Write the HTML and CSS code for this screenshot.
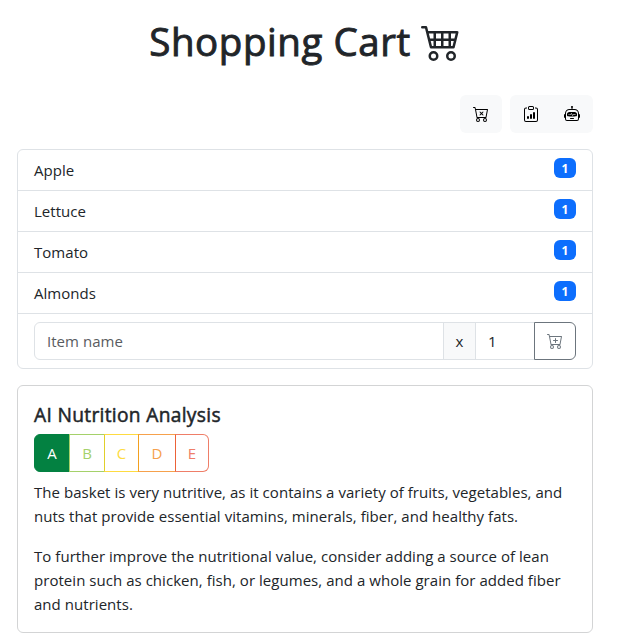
FILE: index.html
```html
<!DOCTYPE html>
<html lang="en">
<head>
<meta charset="utf-8">
<title>Shopping Cart</title>
<link rel="stylesheet" href="styles.css">
</head>
<body>
<svg class="defs" width="0" height="0">
  <symbol id="cart" viewBox="0 0 16 16"><path d="M.5 1a.5.5 0 0 0 0 1h1.11l.401 1.607 1.498 7.985A.5.5 0 0 0 4 12h1a2 2 0 1 0 0 4 2 2 0 0 0 0-4h7a2 2 0 1 0 0 4 2 2 0 0 0 0-4h1a.5.5 0 0 0 .491-.408l1.5-8A.5.5 0 0 0 14.5 3H2.89l-.405-1.621A.5.5 0 0 0 2 1zm3.915 10L3.102 4h10.796l-1.313 7zM6 14a1 1 0 1 1-2 0 1 1 0 0 1 2 0m7 0a1 1 0 1 1-2 0 1 1 0 0 1 2 0"/></symbol>
</svg>
<main class="container">
  <h1 class="title"><span>Shopping Cart</span>
    <svg class="title-icon" viewBox="0 0 16 16"><path d="M0 2.5A.5.5 0 0 1 .5 2H2a.5.5 0 0 1 .485.379L2.89 4H14.5a.5.5 0 0 1 .485.621l-1.5 6A.5.5 0 0 1 13 11H4a.5.5 0 0 1-.485-.379L1.61 3H.5a.5.5 0 0 1-.5-.5M3.14 5l.5 2H5V5zM6 5v2h2V5zm3 0v2h2V5zm3 0v2h1.36l.5-2zm1.11 3H12v2h.61zM11 8H9v2h2zM8 8H6v2h2zM5 8H3.89l.5 2H5zm0 5a1 1 0 1 0 0 2 1 1 0 0 0 0-2m-2 1a2 2 0 1 1 4 0 2 2 0 0 1-4 0m9-1a1 1 0 1 0 0 2 1 1 0 0 0 0-2m-2 1a2 2 0 1 1 4 0 2 2 0 0 1-4 0"/></svg>
  </h1>
  <div class="toolbar">
    <button class="btn" type="button" aria-label="Clear cart"><svg class="icon" viewBox="0 0 16 16"><use href="#cart"/><path d="M7.354 5.646a.5.5 0 1 0-.708.708L7.793 7.5 6.646 8.646a.5.5 0 1 0 .708.708L8.5 8.207l1.146 1.147a.5.5 0 0 0 .708-.708L9.207 7.5l1.147-1.146a.5.5 0 0 0-.708-.708L8.5 6.793z"/></svg></button>
    <div class="btn-group">
      <button class="btn" type="button" aria-label="Report"><svg class="icon" viewBox="0 0 16 16"><path d="M4 11a1 1 0 1 1 2 0v1a1 1 0 1 1-2 0zm6-4a1 1 0 1 1 2 0v5a1 1 0 1 1-2 0zM7 9a1 1 0 0 1 2 0v3a1 1 0 1 1-2 0z"/><path d="M4 1.5H3a2 2 0 0 0-2 2V14a2 2 0 0 0 2 2h10a2 2 0 0 0 2-2V3.5a2 2 0 0 0-2-2h-1v1h1a1 1 0 0 1 1 1V14a1 1 0 0 1-1 1H3a1 1 0 0 1-1-1V3.5a1 1 0 0 1 1-1h1z"/><path d="M9.5 1a.5.5 0 0 1 .5.5v1a.5.5 0 0 1-.5.5h-3a.5.5 0 0 1-.5-.5v-1a.5.5 0 0 1 .5-.5zm-3-1A1.5 1.5 0 0 0 5 1.5v1A1.5 1.5 0 0 0 6.5 4h3A1.5 1.5 0 0 0 11 2.5v-1A1.5 1.5 0 0 0 9.5 0z"/></svg></button>
      <button class="btn" type="button" aria-label="AI analysis"><svg class="icon" viewBox="0 0 16 16"><path d="M6 12.5a.5.5 0 0 1 .5-.5h3a.5.5 0 0 1 0 1h-3a.5.5 0 0 1-.5-.5M3 8.062C3 6.76 4.235 5.765 5.53 5.886a26.6 26.6 0 0 0 4.94 0C11.765 5.765 13 6.76 13 8.062v1.157a.93.93 0 0 1-.765.935c-.845.147-2.34.346-4.235.346s-3.39-.2-4.235-.346A.93.93 0 0 1 3 9.219zm4.542-.827a.25.25 0 0 0-.217.068l-.92.9a25 25 0 0 1-1.871-.183.25.25 0 0 0-.068.495c.55.076 1.232.149 2.02.193a.25.25 0 0 0 .189-.071l.754-.736.847 1.71a.25.25 0 0 0 .404.062l.932-.97a25 25 0 0 0 1.922-.188.25.25 0 0 0-.068-.495c-.538.074-1.207.145-1.98.189a.25.25 0 0 0-.166.076l-.754.785-.842-1.7a.25.25 0 0 0-.182-.135"/><path d="M8.5 1.866a1 1 0 1 0-1 0V3h-2A4.5 4.5 0 0 0 1 7.5V8a1 1 0 0 0-1 1v2a1 1 0 0 0 1 1v1a2 2 0 0 0 2 2h10a2 2 0 0 0 2-2v-1a1 1 0 0 0 1-1V9a1 1 0 0 0-1-1v-.5A4.5 4.5 0 0 0 10.5 3h-2zM14 7.5V13a1 1 0 0 1-1 1H3a1 1 0 0 1-1-1V7.5A3.5 3.5 0 0 1 5.5 4h5A3.5 3.5 0 0 1 14 7.5"/></svg></button>
    </div>
  </div>
  <ul class="list">
    <li class="item"><span>Apple</span><span class="badge">1</span></li>
    <li class="item"><span>Lettuce</span><span class="badge">1</span></li>
    <li class="item"><span>Tomato</span><span class="badge">1</span></li>
    <li class="item"><span>Almonds</span><span class="badge">1</span></li>
    <li class="item">
      <div class="input-group">
        <input class="field name" type="text" placeholder="Item name">
        <span class="addon">x</span>
        <input class="field qty" type="text" value="1">
        <button class="add" type="button" aria-label="Add item"><svg class="icon" viewBox="0 0 16 16"><use href="#cart"/><path d="M9 5.5a.5.5 0 0 0-1 0V7H6.5a.5.5 0 0 0 0 1H8v1.5a.5.5 0 0 0 1 0V8h1.5a.5.5 0 0 0 0-1H9z"/></svg></button>
      </div>
    </li>
  </ul>
  <section class="card">
    <h2 class="card-title">AI Nutrition Analysis</h2>
    <div class="grades">
      <span class="grade a">A</span><span class="grade b">B</span><span class="grade c">C</span><span class="grade d">D</span><span class="grade e">E</span>
    </div>
    <p class="text">The basket is very nutritive, as it contains a variety of fruits, vegetables, and nuts that provide essential vitamins, minerals, fiber, and healthy fats.</p>
    <p class="text">To further improve the nutritional value, consider adding a source of lean protein such as chicken, fish, or legumes, and a whole grain for added fiber and nutrients.</p>
  </section>
</main>
</body>
</html>
```
FILE: styles.css
```css
*, *::before, *::after { box-sizing: border-box; }
body {
  margin: 0;
  background: #fff;
  color: #212529;
  font-family: "Open Sans", "Noto Sans", sans-serif;
  font-size: 15px;
  line-height: 24px;
  letter-spacing: 0.04px;
  overflow: hidden;
}
.defs { position: absolute; }
.container { width: 576px; margin-left: 17px; padding-top: 17px; }
.title {
  display: flex;
  justify-content: center;
  gap: 10px;
  height: 48px;
  margin: 0 0 30px;
  font-size: 38.5px;
  font-weight: 400;
  line-height: 48px;
  letter-spacing: 0.55px;
  -webkit-text-stroke: 0.9px currentColor;
}
.title-icon { width: 40px; height: 40px; margin-top: 4px; fill: currentColor; }
.icon { display: block; width: 16px; height: 16px; fill: currentColor; }
.toolbar { display: flex; justify-content: flex-end; gap: 8px; margin-bottom: 16px; }
.btn {
  width: 42px;
  height: 38px;
  padding: 11px 13px;
  border: 0;
  border-radius: 6px;
  background: #f8f9fa;
  color: #000;
}
.btn-group { display: flex; }
.btn-group .btn:first-child { border-radius: 6px 0 0 6px; }
.btn-group .btn:last-child { margin-left: -1px; border-radius: 0 6px 6px 0; }
.list {
  margin: 0 0 16px;
  padding: 0;
  list-style: none;
  border: 1px solid #dee2e6;
  border-radius: 6px;
}
.item { display: flex; justify-content: space-between; padding: 8px 16px; }
.item + .item { border-top: 1px solid #dee2e6; }
.badge {
  width: 22px;
  height: 20px;
  border-radius: 6px;
  background: #0d6efd;
  color: #fff;
  font-size: 12px;
  font-weight: 700;
  line-height: 21px;
  text-align: center;
}
.input-group { display: flex; width: 100%; height: 38px; }
.field {
  min-width: 0;
  padding: 0 12px;
  border: 1px solid #dee2e6;
  background: #fff;
  color: #212529;
  font: inherit;
  letter-spacing: inherit;
}
.field::placeholder { color: #595c5f; opacity: 1; }
.name { flex: 1; border-radius: 6px 0 0 6px; }
.addon {
  width: 33px;
  margin-left: -1px;
  border: 1px solid #dee2e6;
  background: #f8f9fa;
  line-height: 37px;
  text-align: center;
}
.qty { width: 60px; margin-left: -1px; }
.add {
  width: 42px;
  margin-left: -1px;
  padding: 10px 12px;
  border: 1px solid #6c757d;
  border-radius: 0 6px 6px 0;
  background: #fff;
  color: #6c757d;
}
.card {
  height: 248px;
  padding: 16px;
  border: 1px solid #d3d4d5;
  border-radius: 6px;
}
.card-title {
  height: 24px;
  margin: 0 0 8px;
  padding-top: 1px;
  font-size: 19.2px;
  font-weight: 400;
  line-height: 24px;
  letter-spacing: 0.31px;
  -webkit-text-stroke: 0.5px currentColor;
}
.grades { display: flex; height: 38px; margin-bottom: 8px; line-height: 37px; text-align: center; }
.grade { border: 1px solid currentColor; }
.grade + .grade { margin-left: -1px; }
.a { width: 36px; border-radius: 6px 0 0 6px; border-color: #038141; background: #038141; color: #fff; }
.b { width: 36px; color: #a5d16a; }
.c { width: 35px; color: #fedb41; border-left-color: #e0cf2b; }
.d { width: 38px; color: #f6a14c; border-left-color: #f3a01f; }
.e { width: 34px; color: #ef7e68; border-left-color: #ec6238; border-radius: 0 6px 6px 0; }
.text { margin: 0 0 16px; }
```
